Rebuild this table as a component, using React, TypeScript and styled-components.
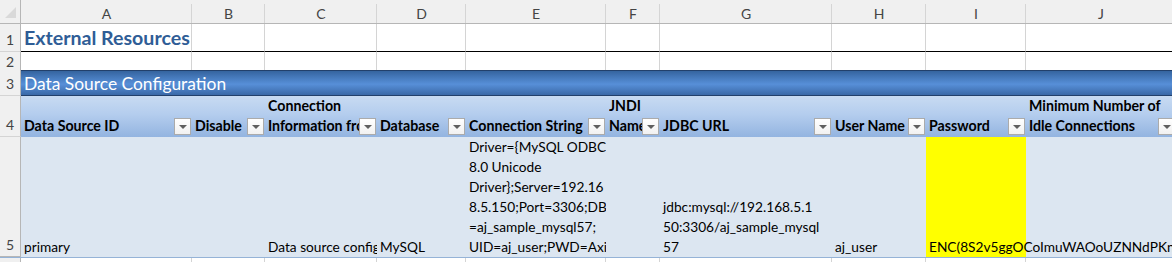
import React from 'react'
import styled, { createGlobalStyle } from 'styled-components'

const GlobalStyle = createGlobalStyle`
  html, body {
    margin: 0;
    padding: 0;
    background: #ffffff;
    overflow: hidden;
  }
  body {
    font-family: Lato, 'Liberation Sans', sans-serif;
    color: #000000;
  }
`

// sheet geometry, taken from the screenshot
const COLUMNS = [
  { key: 'A', width: 171 },
  { key: 'B', width: 73 },
  { key: 'C', width: 112 },
  { key: 'D', width: 89 },
  { key: 'E', width: 140 },
  { key: 'F', width: 54 },
  { key: 'G', width: 172 },
  { key: 'H', width: 94 },
  { key: 'I', width: 100 },
  { key: 'J', width: 150 }
]
const gridTemplate = `21px ${COLUMNS.map((c) => `${c.width}px`).join(' ')}`

const GRID = '#d4d4d4'
const HEAD_BG = '#f0f0f0'
const HEAD_LINE = '#b6b6b6'

const Sheet = styled.div`
  width: 1172px;
  height: 262px;
  overflow: hidden;
  display: flex;
  flex-direction: column;
`

const Row = styled.div<{ $height: number; $bg?: string; $line?: string }>`
  display: grid;
  grid-template-columns: ${gridTemplate};
  height: ${({ $height }) => $height}px;
  flex: none;
  background: ${({ $bg }) => $bg ?? '#ffffff'};
  border-bottom: ${({ $line }) => ($line ? `1px solid ${$line}` : 'none')};
`

const Corner = styled.div`
  background: ${HEAD_BG};
  border-right: 1px solid ${HEAD_LINE};
  border-bottom: 1px solid ${HEAD_LINE};
  display: flex;
  align-items: flex-end;
  justify-content: flex-end;
  padding: 0 3px 4px 0;
`

const ColumnLetter = styled.div`
  background:
    linear-gradient(#d5d5d5, #d5d5d5) right 4px / 1px calc(100% - 4px) no-repeat,
    ${HEAD_BG};
  border-bottom: 1px solid ${HEAD_LINE};
  display: flex;
  align-items: center;
  justify-content: center;
  padding-top: 4px;
  font-size: 14px;
  color: #444444;
`

const RowNumber = styled.div<{ $bottom?: string }>`
  background: ${HEAD_BG};
  border-right: 1px solid ${HEAD_LINE};
  border-bottom: 1px solid ${({ $bottom }) => $bottom ?? GRID};
  display: flex;
  align-items: flex-end;
  justify-content: center;
  padding-bottom: 1px;
  line-height: 20px;
  font-size: 14px;
  color: #444444;
`

const Cell = styled.div<{ $bottom?: string }>`
  border-right: 1px solid ${GRID};
  border-bottom: ${({ $bottom }) => ($bottom ? `1px solid ${$bottom}` : 'none')};
  min-width: 0;
`

const TitleCell = styled(Cell)`
  display: flex;
  align-items: flex-end;
  padding: 0 0 2px 3px;
  white-space: nowrap;
  font-size: 19.6px;
  font-weight: 700;
  color: #2f5d96;
`

const Band = styled.div`
  grid-column: 2 / -1;
  border-top: 1px solid #22406b;
  border-bottom: 1px solid #22406b;
  background: linear-gradient(#35649f 0%, #4e84c9 40%, #578fd8 55%, #3a69a7 100%);
  display: flex;
  align-items: center;
  padding-left: 3px;
  color: #ffffff;
  font-size: 17.4px;
  white-space: nowrap;
`

const HeaderCell = styled.div`
  display: flex;
  align-items: flex-end;
  padding: 0 1px 0 3px;
  min-width: 0;
`

const HeaderText = styled.div<{ $clip: boolean }>`
  flex: 1;
  min-width: 0;
  overflow: ${({ $clip }) => ($clip ? 'hidden' : 'visible')};
  white-space: nowrap;
  font-weight: 700;
  font-size: 14.2px;
  line-height: 20px;
  padding-bottom: 1px;
`

const FilterButton = styled.div`
  flex: none;
  width: 15px;
  height: 15px;
  margin-bottom: 2px;
  border: 1px solid #ababab;
  background: linear-gradient(#ffffff, #f1f1f1);
  display: flex;
  align-items: center;
  justify-content: center;

  &::after {
    content: '';
    border-left: 4px solid transparent;
    border-right: 4px solid transparent;
    border-top: 4px solid #5f5f5f;
    margin-top: 1px;
  }
`

const DataCell = styled.div<{ $fill?: string; $clip?: boolean }>`
  display: flex;
  flex-direction: column;
  justify-content: flex-end;
  padding: 0 0 0 3px;
  min-width: 0;
  background: ${({ $fill }) => $fill ?? 'transparent'};
  overflow: ${({ $clip }) => ($clip ? 'hidden' : 'visible')};
  font-size: 13.7px;
  line-height: 20px;
  white-space: nowrap;
`

const headers: Array<{ lines: string[]; clip?: boolean }> = [
  { lines: ['Data Source ID'] },
  { lines: ['Disable'] },
  { lines: ['Connection', 'Information from Excel'] },
  { lines: ['Database'] },
  { lines: ['Connection String'] },
  { lines: ['JNDI', 'Name'] },
  { lines: ['JDBC URL'] },
  { lines: ['User Name'] },
  { lines: ['Password'] },
  { lines: ['Minimum Number of', 'Idle Connections'], clip: false }
]

const connectionString = [
  'Driver={MySQL ODBC',
  '8.0 Unicode',
  'Driver};Server=192.16',
  '8.5.150;Port=3306;DB',
  '=aj_sample_mysql57;',
  'UID=aj_user;PWD=Axi'
]

const jdbcUrl = ['jdbc:mysql://192.168.5.1', '50:3306/aj_sample_mysql', '57']

const CornerMark = (): JSX.Element => (
  <svg width='12' height='12' viewBox='0 0 12 12'>
    <polygon points='11,0 11,11 0,11' fill='#d9d9d9' />
  </svg>
)

const Lines = ({ lines }: { lines: string[] }): JSX.Element => (
  <>
    {lines.map((l) => (
      <div key={l}>{l}</div>
    ))}
  </>
)

const App = (): JSX.Element => {
  return (
    <>
      <GlobalStyle />
      <Sheet>
        <Row $height={24} $bg={HEAD_BG}>
          <Corner>
            <CornerMark />
          </Corner>
          {COLUMNS.map((c) => (
            <ColumnLetter key={c.key}>{c.key}</ColumnLetter>
          ))}
        </Row>

        <Row $height={28}>
          <RowNumber>1</RowNumber>
          <TitleCell $bottom='#000000'>External Resources</TitleCell>
          {COLUMNS.slice(1).map((c) => (
            <Cell key={c.key} $bottom='#000000' />
          ))}
        </Row>

        <Row $height={18}>
          <RowNumber>2</RowNumber>
          {COLUMNS.map((c) => (
            <Cell key={c.key} />
          ))}
        </Row>

        <Row $height={26}>
          <RowNumber>3</RowNumber>
          <Band>Data Source Configuration</Band>
        </Row>

        <Row $height={41} $bg='linear-gradient(#c8dbf2 0%, #b4cdee 45%, #93b4e0 100%)'>
          <RowNumber>4</RowNumber>
          {headers.map((h) => (
            <HeaderCell key={h.lines.join()}>
              <HeaderText $clip={h.clip ?? true}>
                <Lines lines={h.lines} />
              </HeaderText>
              <FilterButton />
            </HeaderCell>
          ))}
        </Row>

        <Row $height={120} $bg='#dce6f1' $line='#95b3d7'>
          <RowNumber $bottom={HEAD_LINE}>5</RowNumber>
          <DataCell $clip>primary</DataCell>
          <DataCell />
          <DataCell $clip>Data source configuration</DataCell>
          <DataCell $clip>MySQL</DataCell>
          <DataCell $clip>
            <Lines lines={connectionString} />
          </DataCell>
          <DataCell />
          <DataCell $clip>
            <Lines lines={jdbcUrl} />
          </DataCell>
          <DataCell $clip>aj_user</DataCell>
          <DataCell $fill='#ffff00'>ENC(8S2v5ggOCoImuWAOoUZNNdPKntI</DataCell>
          <DataCell />
        </Row>

        <Row $height={10}>
          <RowNumber>6</RowNumber>
          {COLUMNS.map((c) => (
            <Cell key={c.key} />
          ))}
        </Row>
      </Sheet>
    </>
  )
}

export default App
